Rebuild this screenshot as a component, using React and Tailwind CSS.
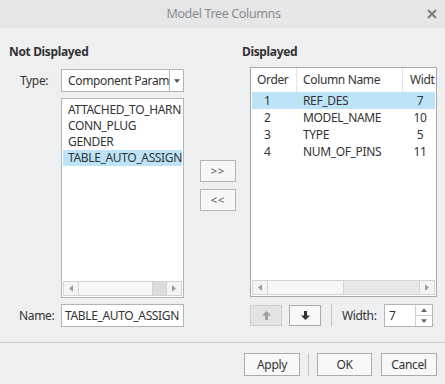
import React from "react";

const Tri = ({ dir = "left", color = "#9a9a9a" }) => {
  const pts = {
    left: "5,0 0,4 5,8",
    right: "0,0 5,4 0,8",
    up: "0,5 4,0 8,5",
    down: "0,0 4,5 8,0",
  }[dir];
  const vb = dir === "left" || dir === "right" ? "0 0 5 8" : "0 0 8 5";
  const w = dir === "left" || dir === "right" ? 4 : 6;
  const h = dir === "left" || dir === "right" ? 7 : 4;
  return (
    <svg width={w} height={h} viewBox={vb}>
      <polygon points={pts} fill={color} />
    </svg>
  );
};

const HScroll = ({ thumbW, track }) => (
  <div className="flex h-[15px] mx-[1px] mb-[1px] border border-[#d4d4d4] bg-[#e8e8e8]">
    <div className="w-[15px] flex items-center justify-center border-r border-[#d4d4d4] bg-[#f4f4f4]">
      <Tri dir="left" />
    </div>
    <div className="flex-1 flex">
      <div className={`${thumbW} bg-[#f7f7f7] border-r border-[#d4d4d4]`} />
      <div className={`flex-1 ${track}`} />
    </div>
    <div className="w-[15px] flex items-center justify-center border-l border-[#d4d4d4] bg-[#f4f4f4]">
      <Tri dir="right" />
    </div>
  </div>
);

const Arrow = ({ up, color }) => (
  <svg width="9" height="9" viewBox="0 0 9 9">
    {up ? (
      <path d="M4.5 0 L9 4.5 L6 4.5 L6 9 L3 9 L3 4.5 L0 4.5 Z" fill={color} />
    ) : (
      <path d="M3 0 L6 0 L6 4.5 L9 4.5 L4.5 9 L0 4.5 L3 4.5 Z" fill={color} />
    )}
  </svg>
);

export default function App() {
  const rows = [
    ["1", "REF_DES", "7", true],
    ["2", "MODEL_NAME", "10", false],
    ["3", "TYPE", "5", false],
    ["4", "NUM_OF_PINS", "11", false],
  ];
  return (
    <div
      className="w-[445px] h-[384px] bg-[#eeeff1] text-[12px] tracking-[-0.35px] text-[#333] flex flex-col overflow-hidden"
      style={{ fontFamily: '"Noto Sans", "Open Sans", sans-serif' }}
    >
      {/* title bar */}
      <div className="h-[28px] bg-[#e5e6e8] flex items-center relative">
        <div className="flex-1 text-center text-[#8c8c8c] text-[12.5px] pl-[2px]">Model Tree Columns</div>
        <div className="absolute right-[7px] top-[6px] w-[12px] h-[16px] flex items-center justify-center">
          <svg width="10" height="10" viewBox="0 0 10 10">
            <path d="M1 1 L9 9 M9 1 L1 9" stroke="#808080" strokeWidth="2.2" />
          </svg>
        </div>
      </div>

      {/* main */}
      <div className="h-[315px] flex border-b border-[#cdcdcf]">
        {/* left */}
        <div className="w-[192px] pl-[9px] pt-[15px] flex flex-col">
          <div className="font-bold h-[17px] leading-[17px] text-[#333]">Not Displayed</div>
          <div className="mt-[9px] flex items-center">
            <div className="w-[52px] pl-[11px]">Type:</div>
            <div className="w-[123px] h-[23px] bg-white border border-[#b4b4b4] flex">
              <div className="flex-1 overflow-hidden whitespace-nowrap pl-[6px] leading-[21px]">Component Parameter</div>
              <div className="w-[14px] border-l border-[#b4b4b4] flex items-center justify-center">
                <Tri dir="down" color="#555" />
              </div>
            </div>
          </div>
          <div className="mt-[6px] ml-[52px] w-[123px] h-[200px] bg-white border border-[#b4b4b4] flex flex-col">
            <div className="flex-1 pt-[3px] px-[1px] overflow-hidden">
              {["ATTACHED_TO_HARNESS", "CONN_PLUG", "GENDER", "TABLE_AUTO_ASSIGN"].map((t, i) => (
                <div
                  key={t}
                  className={`h-[16px] leading-[16px] pl-[5px] whitespace-nowrap overflow-hidden ${i === 3 ? "bg-[#bde3f8]" : ""}`}
                >
                  {t}
                </div>
              ))}
            </div>
            <HScroll thumbW="w-[74px]" track="bg-[#dcdcdc]" />
          </div>
          <div className="mt-[6px] flex items-center">
            <div className="w-[52px] pl-[10px]">Name:</div>
            <div className="w-[123px] h-[23px] bg-white border border-[#b4b4b4] pl-[3px] leading-[21px] whitespace-nowrap overflow-hidden">
              TABLE_AUTO_ASSIGN
            </div>
          </div>
        </div>

        {/* middle */}
        <div className="w-[50px] pl-[8px] pt-[132px] flex flex-col gap-[7px]">
          <div className="w-[36px] h-[22px] bg-[#f7f7f7] border border-[#b4b4b4] flex items-center justify-center text-[11px] text-[#555] tracking-[1px]">
            &gt;&gt;
          </div>
          <div className="w-[36px] h-[22px] bg-[#f7f7f7] border border-[#b4b4b4] flex items-center justify-center text-[11px] text-[#555] tracking-[1px]">
            &lt;&lt;
          </div>
        </div>

        {/* right */}
        <div className="flex-1 pt-[15px] flex flex-col">
          <div className="font-bold h-[17px] leading-[17px] text-[#333]">Displayed</div>
          <div className="mt-[7px] ml-[8px] w-[187px] h-[230px] bg-white border border-[#a8a8a8] flex flex-col">
            <div className="flex-1 overflow-hidden px-[1px]">
              <div className="h-[24px] flex items-center whitespace-nowrap">
                <div className="w-[45px] pl-[5px] border-r border-[#e4e4e4] h-full leading-[24px]">Order</div>
                <div className="w-[106px] pl-[6px] border-r border-[#e4e4e4] h-full leading-[24px]">Column Name</div>
                <div className="flex-1 pl-[7px] overflow-hidden h-full leading-[24px]">Width</div>
              </div>
              {rows.map(([o, n, w, sel]) => (
                <div key={o} className={`h-[17px] leading-[17px] flex whitespace-nowrap ${sel ? "bg-[#bde3f8]" : ""}`}>
                  <div className="w-[45px] pl-[12px]">{o}</div>
                  <div className="w-[106px] pl-[6px]">{n}</div>
                  <div className="flex-1 text-center pl-[2px]">{w}</div>
                </div>
              ))}
            </div>
            <HScroll thumbW="flex-1" track="" />
          </div>
          <div className="mt-[7px] ml-[8px] flex items-center h-[23px]">
            <div className="w-[32px] h-[21px] bg-[#e3e3e3] border border-[#cfcfcf] flex items-center justify-center">
              <Arrow up color="#a0a0a0" />
            </div>
            <div className="ml-[7px] w-[32px] h-[21px] bg-[#f8f8f8] border border-[#ababab] flex items-center justify-center">
              <Arrow color="#333" />
            </div>
            <div className="ml-[10px] w-[1px] h-[23px] bg-[#c4c4c4]" />
            <div className="ml-[10px] w-[42px]">Width:</div>
            <div className="w-[49px] h-[23px] bg-white border border-[#b4b4b4] flex">
              <div className="flex-1 pl-[4px] leading-[21px]">7</div>
              <div className="w-[17px] border-l border-[#d0d0d0] flex flex-col">
                <div className="flex-1 flex items-center justify-center border-b border-[#d0d0d0]">
                  <Tri dir="up" color="#666" />
                </div>
                <div className="flex-1 flex items-center justify-center">
                  <Tri dir="down" color="#666" />
                </div>
              </div>
            </div>
          </div>
        </div>
      </div>

      {/* bottom buttons */}
      <div className="flex-1 flex items-start justify-end pt-[10px] pr-[8px]">
        <div className="w-[56px] h-[23px] bg-[#f8f8f8] border border-[#ababab] flex items-center justify-center">Apply</div>
        <div className="ml-[8px] w-[1px] h-[23px] bg-[#c4c4c4]" />
        <div className="ml-[8px] w-[55px] h-[23px] bg-[#f8f8f8] border border-[#ababab] flex items-center justify-center">OK</div>
        <div className="ml-[9px] w-[56px] h-[23px] bg-[#f8f8f8] border border-[#ababab] flex items-center justify-center">Cancel</div>
      </div>
    </div>
  );
}
